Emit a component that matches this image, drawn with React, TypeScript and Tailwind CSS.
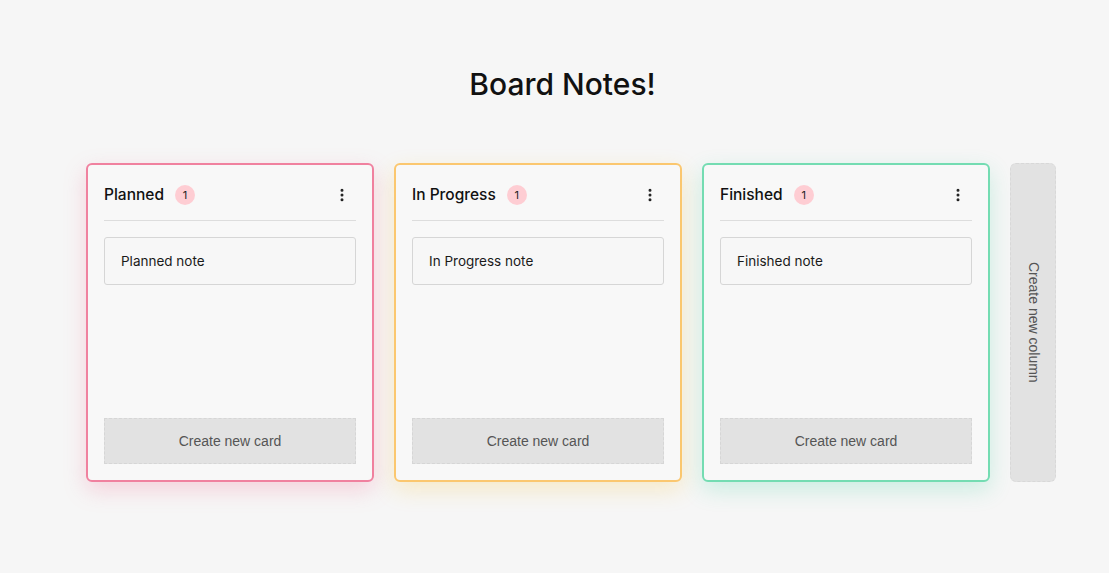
import { EllipsisVertical } from "lucide-react";

type Column = {
  id: string;
  title: string;
  note: string;
  frame: string;
};

const columns: Column[] = [
  {
    id: "planned",
    title: "Planned",
    note: "Planned note",
    frame: "border-[#f0819f] shadow-[0_8px_22px_rgba(244,114,150,0.28)]",
  },
  {
    id: "progress",
    title: "In Progress",
    note: "In Progress note",
    frame: "border-[#fbc76f] shadow-[0_8px_22px_rgba(251,191,36,0.22)]",
  },
  {
    id: "finished",
    title: "Finished",
    note: "Finished note",
    frame: "border-[#74dcb2] shadow-[0_8px_22px_rgba(52,211,153,0.22)]",
  },
];

function BoardColumn({ column }: { column: Column }) {
  return (
    <div
      className={`flex h-[319px] w-[288px] flex-col rounded-md border-2 bg-[#f8f8f8] p-4 ${column.frame}`}
    >
      <div className="flex h-[40px] items-start border-b border-[#dddddd] pt-[2px]">
        <div className="flex h-[24px] flex-1 items-center">
          <span className="text-[15.5px] font-medium text-[#111]">{column.title}</span>
          <span className="ml-[11px] flex h-5 w-5 items-center justify-center rounded-full bg-[#fecdd3] text-[11px] text-[#222]">
            1
          </span>
        </div>
        <button type="button" className="mr-[6px] flex h-[24px] items-center text-[#222]">
          <EllipsisVertical size={16} strokeWidth={2.5} />
        </button>
      </div>
      <div className="mt-4 flex h-[48px] items-center rounded-[3px] border border-[#d6d6d6] bg-[#f7f7f7] px-4 text-[13.5px] text-[#1a1a1a]">
        {column.note}
      </div>
      <button
        type="button"
        className="mt-auto h-[46px] w-full border border-dashed border-[#d6d6d6] bg-[#e2e2e2] font-['Liberation_Sans',Arial,sans-serif] text-[14px] text-[#555]"
      >
        Create new card
      </button>
    </div>
  );
}

export default function App() {
  return (
    <div className="min-h-screen bg-[#f6f6f6] font-['Inter',sans-serif]">
      <h1 className="pt-[66px] pl-[16px] text-center text-[30px] leading-[36px] font-medium text-[#111]">
        Board Notes!
      </h1>
      <div className="mt-[61px] flex gap-[20px] pl-[86px]">
        {columns.map((column) => (
          <BoardColumn key={column.id} column={column} />
        ))}
        <button
          type="button"
          className="flex h-[319px] w-[46px] items-center justify-center rounded-md border border-dashed border-[#d8d8d8] bg-[#e2e2e2] font-['Liberation_Sans',Arial,sans-serif] text-[14px] text-[#555] [writing-mode:vertical-rl]"
        >
          Create new column
        </button>
      </div>
    </div>
  );
}
